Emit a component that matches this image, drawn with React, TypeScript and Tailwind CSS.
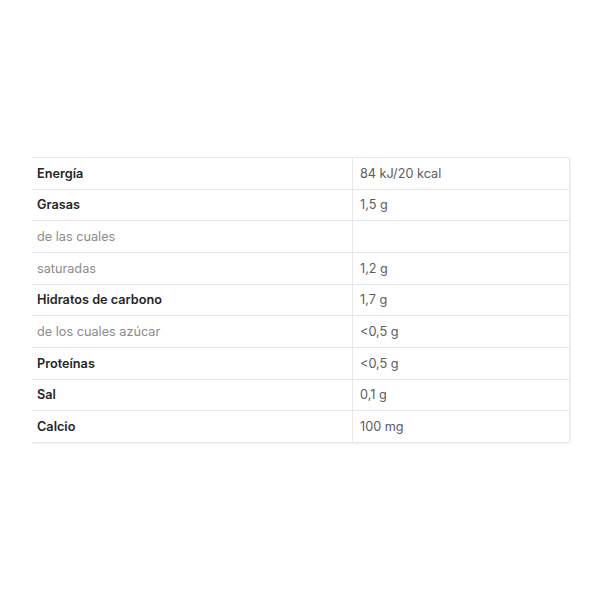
const rows: { label: string; value: string; bold: boolean }[] = [
  { label: "Energía", value: "84 kJ/20 kcal", bold: true },
  { label: "Grasas", value: "1,5 g", bold: true },
  { label: "de las cuales", value: "", bold: false },
  { label: "saturadas", value: "1,2 g", bold: false },
  { label: "Hidratos de carbono", value: "1,7 g", bold: true },
  { label: "de los cuales azúcar", value: "<0,5 g", bold: false },
  { label: "Proteínas", value: "<0,5 g", bold: true },
  { label: "Sal", value: "0,1 g", bold: true },
  { label: "Calcio", value: "100 mg", bold: true },
];

export default function App() {
  return (
    <div className="w-[600px] h-[600px] bg-white pt-[157px] pl-[32px] font-['Inter','Liberation_Sans',sans-serif]">
      <div className="w-[538px] border-t border-r border-[#e8e8e8] rounded-tr-[3px] rounded-br-[3px] shadow-[1px_1px_2px_rgba(0,0,0,0.06)]">
        {rows.map((row) => (
          <div
            key={row.label}
            className="flex h-[31.67px] border-b border-[#e8e8e8] text-[12.7px]"
          >
            <div
              className={`w-[321px] flex items-center pl-[5px] border-r border-[#e8e8e8] ${
                row.bold ? "font-semibold text-[#262626]" : "font-normal text-[#8c8c8c]"
              }`}
            >
              {row.label}
            </div>
            <div className="flex-1 flex items-center pl-[7px] font-normal text-[#5c5c5c]">
              {row.value}
            </div>
          </div>
        ))}
      </div>
    </div>
  );
}
